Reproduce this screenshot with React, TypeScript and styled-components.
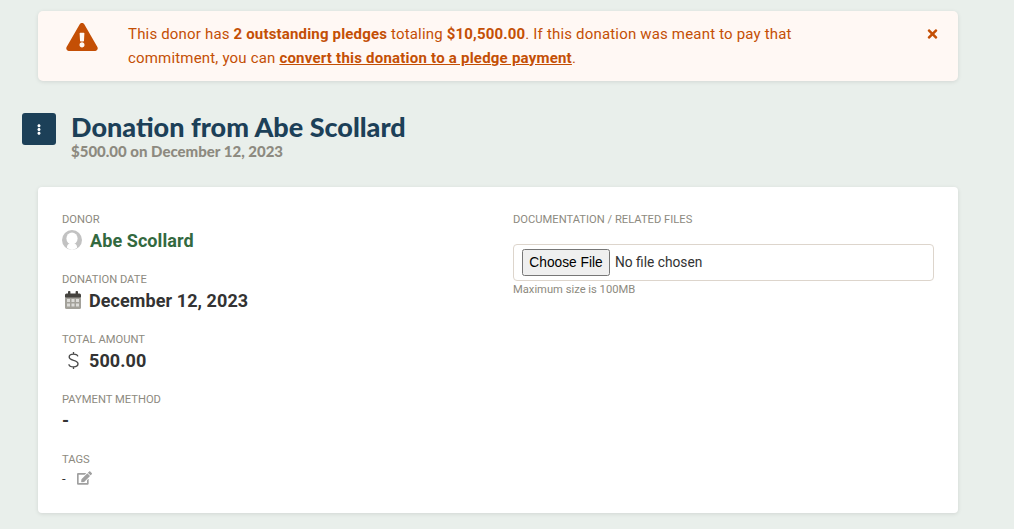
import React from "react";
import styled, { createGlobalStyle } from "styled-components";
import { FaExclamationTriangle, FaTimes, FaEllipsisV, FaEdit } from "react-icons/fa";

const Global = createGlobalStyle`
  html, body { margin: 0; padding: 0; background: #e9efeb; height: 529px; overflow: hidden; }
  body { font-family: Roboto, "Liberation Sans", sans-serif; }
`;

const Page = styled.div`
  display: flex;
  flex-direction: column;
  padding: 11px 56px 0 38px;
`;

const Alert = styled.div`
  display: flex;
  align-items: flex-start;
  height: 70px;
  box-sizing: border-box;
  padding: 12px 20px 0 28px;
  background: #fff8f4;
  border-radius: 5px;
  box-shadow: 0 1px 4px rgba(0, 0, 0, 0.1);
  color: #c44f05;
`;

const AlertIcon = styled(FaExclamationTriangle)`
  width: 32px;
  height: 28px;
  flex: none;
  margin: 0 30px 0 0;
  color: #c44f05;
`;

const AlertText = styled.p`
  flex: 1;
  margin: 0;
  max-width: 700px;
  font-size: 15px;
  line-height: 23.5px;
  letter-spacing: 0.18px;
  b { font-weight: 700; letter-spacing: 0.17px; }
  a { font-weight: 700; color: inherit; text-decoration: underline; letter-spacing: 0.22px; }
`;

const CloseIcon = styled(FaTimes)`
  margin-left: auto;
  margin-top: 4px;
  width: 11px;
  height: 14px;
`;

const Header = styled.div`
  display: flex;
  align-items: flex-start;
  margin: 32px 0 0 -16px;
  height: 74px;
`;

const MenuButton = styled.button`
  width: 34px;
  height: 32px;
  flex: none;
  padding: 0;
  margin-right: 15px;
  display: flex;
  align-items: center;
  justify-content: center;
  border: none;
  border-radius: 3px;
  background: #1c4058;
  color: #fff;
  svg { width: 10px; height: 11px; }
`;

const Titles = styled.div`
  display: flex;
  flex-direction: column;
`;

const Title = styled.h1`
  margin: 0;
  font-family: Lato, sans-serif;
  font-size: 27px;
  line-height: 28px;
  font-weight: 900;
  color: #1c4058;
`;

const Subtitle = styled.div`
  font-family: Lato, sans-serif;
  font-size: 15px;
  line-height: 20px;
  font-weight: 900;
  color: #8d8a80;
`;

const Card = styled.section`
  display: grid;
  grid-template-columns: 451px 421px;
  height: 326px;
  box-sizing: border-box;
  padding: 26px 24px 0;
  background: #fff;
  border-radius: 4px;
  box-shadow: 0 1px 4px rgba(0, 0, 0, 0.1);
`;

const Column = styled.div`
  display: flex;
  flex-direction: column;
`;

const Field = styled.div`
  height: 60px;
  display: flex;
  flex-direction: column;
`;

const Label = styled.div`
  font-size: 11.2px;
  line-height: 13px;
  color: #8d8a80;
  text-transform: uppercase;
`;

const Value = styled.div`
  display: flex;
  align-items: center;
  height: 26px;
  margin-top: 1px;
  font-size: 18px;
  font-weight: 700;
  letter-spacing: 0.08px;
  color: #333;
`;

const DonorLink = styled.a`
  color: #33693f;
`;

const IconSvg = styled.svg<{ $w: number; $h: number; $ml: number; $mr: number }>`
  flex: none;
  width: ${(p) => p.$w}px;
  height: ${(p) => p.$h}px;
  margin: 0 ${(p) => p.$mr}px 0 ${(p) => p.$ml}px;
`;

const Avatar = () => (
  <IconSvg viewBox="0 0 20 20" $w={20} $h={20} $ml={0} $mr={8}>
    <circle cx="10" cy="10" r="10" fill="#c2c2c2" />
    <ellipse cx="10" cy="8.6" rx="5.6" ry="6" fill="#fff" />
    <path d="M6 14.5c1.2-1 2.5-1.5 4-1.5s2.800.5 4 1.5c.7.6 1 1.600 1.100 3.300A10 10 0 0 1 10 20a10 10 0 0 1-5.100-2.200C5 16.100 5.300 15.100 6 14.500z" fill="#fff" />
  </IconSvg>
);

const CalendarIcon = () => (
  <IconSvg viewBox="0 0 16 18" $w={16} $h={18} $ml={3} $mr={8}>
    <rect x="0" y="6" width="16" height="12" rx="1.5" fill="#a3a19a" />
    <path d="M1.500 2.500h13A1.500 1.500 0 0 1 16 4v2.500H0V4a1.500 1.500 0 0 1 1.500-1.500z" fill="#45433f" />
    <rect x="3" y="0" width="2.400" height="4" rx="0.800" fill="#45433f" />
    <rect x="10.600" y="0" width="2.400" height="4" rx="0.800" fill="#45433f" />
    {[2, 6.5, 11].map((x) =>
      [8, 12.5].map((y) => <rect key={`${x}-${y}`} x={x} y={y} width="3" height="3" fill="#dcdbd8" />)
    )}
  </IconSvg>
);

const DollarIcon = () => (
  <IconSvg viewBox="0 0 12 20" $w={11} $h={19} $ml={6} $mr={10}>
    <path
      d="M10.700 5.500C10.500 3.800 8.600 3 6 3 3.300 3 1.300 4.200 1.300 6.300 1.300 8.500 3.500 9.200 6 9.800c2.700.7 4.900 1.400 4.900 3.800 0 2.200-2.100 3.400-4.900 3.400-2.800 0-4.800-.9-5-2.900M6 .8V3M6 17v2.200"
      fill="none"
      stroke="#4a4a4a"
      strokeWidth="1.500"
    />
  </IconSvg>
);

const TagsRow = styled.div`
  display: flex;
  align-items: center;
  height: 24px;
  font-size: 13px;
  color: #333;
`;

const EditIcon = styled(FaEdit)`
  width: 15px;
  height: 14px;
  margin-left: 11px;
  color: #a0a0a0;
`;

const FileBox = styled.div`
  display: flex;
  align-items: center;
  height: 37px;
  box-sizing: border-box;
  margin-top: 18px;
  padding: 0 8px;
  border: 1px solid #ddd5cc;
  border-radius: 4px;
`;

const FileInput = styled.input`
  font-family: Roboto, sans-serif;
  font-size: 13.75px;
  color: #333;
  &::file-selector-button {
    height: 27px;
    width: 88px;
    padding: 0;
    margin-right: 5px;
  }
`;

const Hint = styled.div`
  margin-top: 2px;
  font-size: 11.2px;
  line-height: 14px;
  color: #8d8a80;
`;

export default function App() {
  return (
    <Page>
      <Global />
      <Alert>
        <AlertIcon />
        <AlertText>
          This donor has <b>2 outstanding pledges</b> totaling <b>$10,500.00</b>. If this donation was meant to pay that commitment, you can <a href="#">convert this donation to a pledge payment</a>.
        </AlertText>
        <CloseIcon />
      </Alert>
      <Header>
        <MenuButton><FaEllipsisV /></MenuButton>
        <Titles>
          <Title>Donation from Abe Scollard</Title>
          <Subtitle>$500.00 on December 12, 2023</Subtitle>
        </Titles>
      </Header>
      <Card>
        <Column>
          <Field>
            <Label>Donor</Label>
            <Value><Avatar /><DonorLink>Abe Scollard</DonorLink></Value>
          </Field>
          <Field>
            <Label>Donation Date</Label>
            <Value><CalendarIcon />December 12, 2023</Value>
          </Field>
          <Field>
            <Label>Total Amount</Label>
            <Value><DollarIcon />500.00</Value>
          </Field>
          <Field>
            <Label>Payment Method</Label>
            <Value>-</Value>
          </Field>
          <Field>
            <Label>Tags</Label>
            <TagsRow>-<EditIcon /></TagsRow>
          </Field>
        </Column>
        <Column>
          <Label>Documentation / Related Files</Label>
          <FileBox><FileInput type="file" /></FileBox>
          <Hint>Maximum size is 100MB</Hint>
        </Column>
      </Card>
    </Page>
  );
}
